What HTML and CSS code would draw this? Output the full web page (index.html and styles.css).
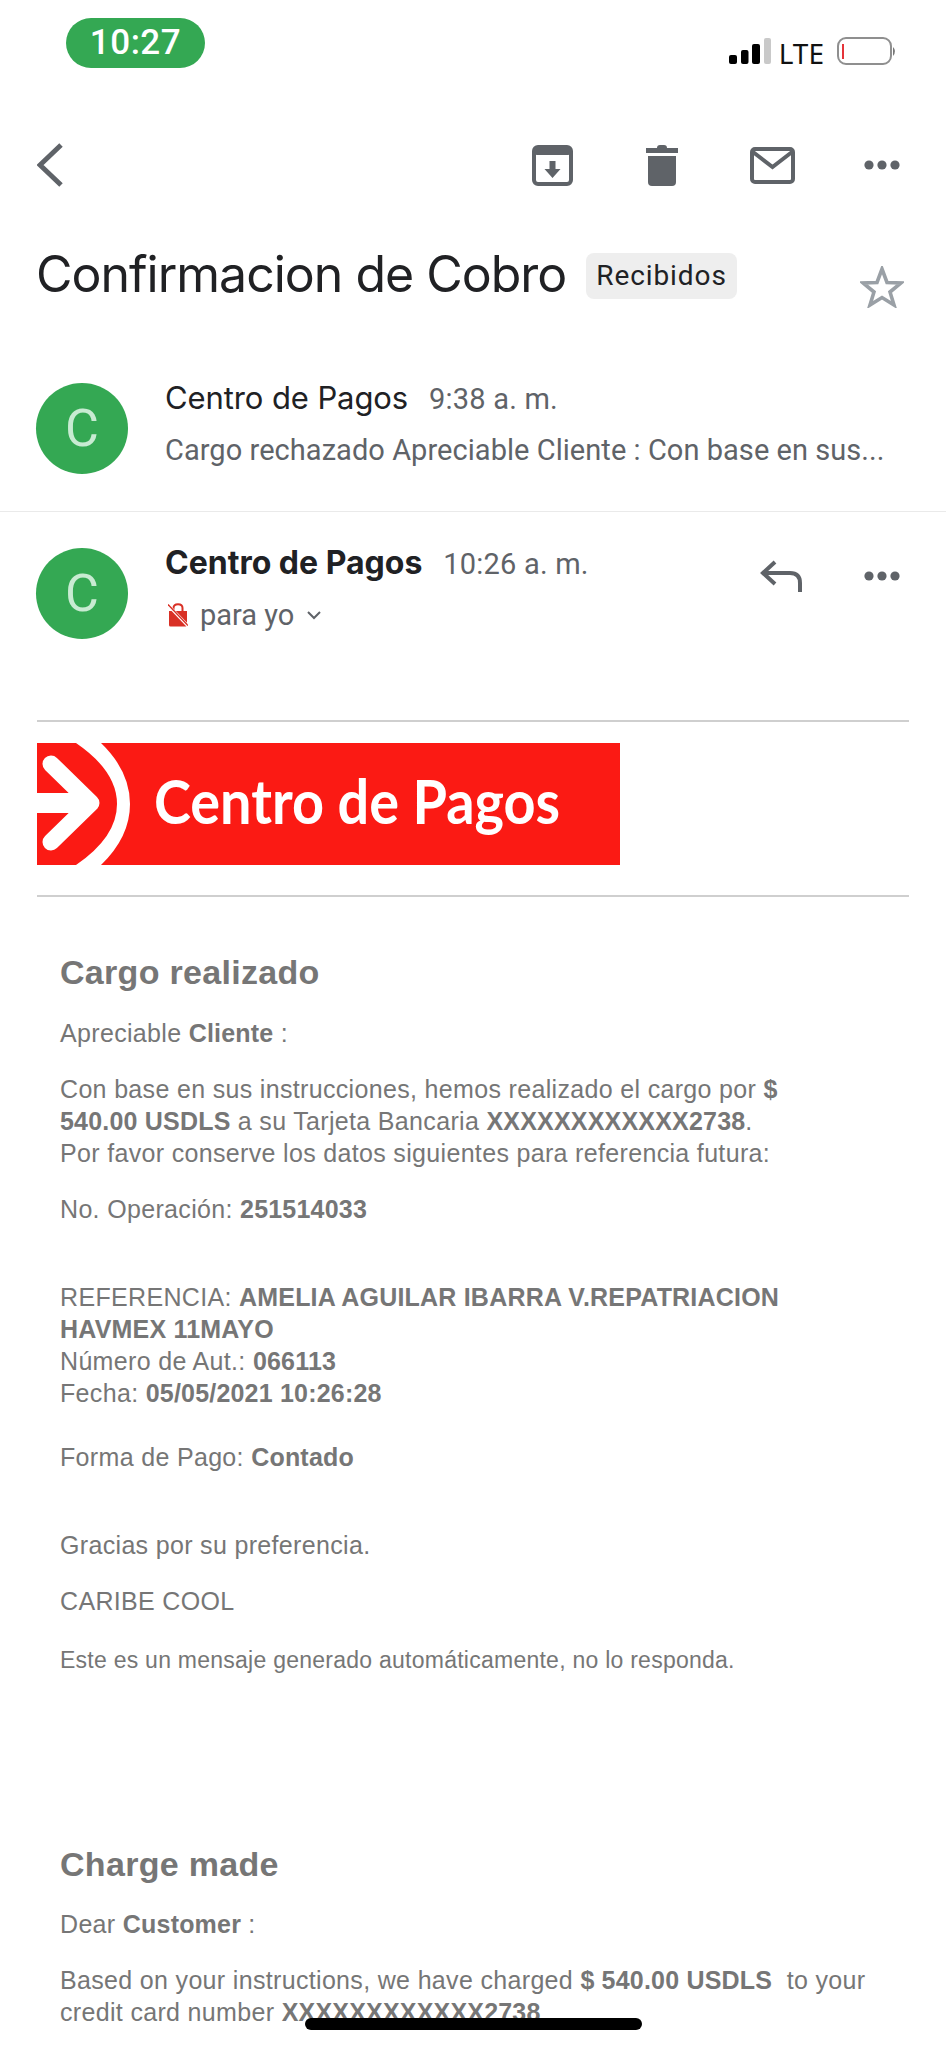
FILE: index.html
```html
<!DOCTYPE html>
<html lang="es">
<head>
    <meta charset="UTF-8">
    <meta name="viewport" content="width=device-width, initial-scale=1.0">
    <title>Confirmacion de Cobro</title>
    <link rel="stylesheet" href="styles.css">
</head>
<body>
<div class="page">

    <div class="status">
        <div class="clock">10:27</div>
        <div class="status-right">
            <svg class="signal" width="42" height="26" viewBox="0 0 42 26">
                <rect x="0" y="17" width="8" height="9" rx="2" fill="#000"/>
                <rect x="12" y="12" width="7.5" height="14" rx="2" fill="#000"/>
                <rect x="23" y="6" width="8" height="20" rx="2" fill="#000"/>
                <rect x="35" y="0" width="7" height="26" rx="2" fill="#c9c9c9"/>
            </svg>
            <span class="lte">LTE</span>
            <svg class="battery" width="60" height="28" viewBox="0 0 60 28">
                <rect x="1" y="1" width="53" height="26" rx="8" fill="none" stroke="#8f8f8f" stroke-width="2"/>
                <rect x="5" y="7" width="2" height="15" fill="#e5343a"/>
                <path d="M56 10 q4 4 0 9 z" fill="#777"/>
            </svg>
        </div>
    </div>

    <div class="toolbar">
        <svg class="back" width="26" height="44" viewBox="0 0 26 44">
            <path d="M24 2 L3 22 L24 42" fill="none" stroke="#5f6368" stroke-width="5"/>
        </svg>
        <div class="actions">
            <div class="slot">
                <svg width="41" height="41" viewBox="0 0 41 41">
                    <rect x="2" y="2" width="37" height="37" rx="4" fill="none" stroke="#5f6368" stroke-width="4"/>
                    <rect x="2" y="2" width="37" height="8" rx="3" fill="#5f6368"/>
                    <path d="M17.5 16 h6 v8 h5 l-8 9 l-8 -9 h5 z" fill="#5f6368"/>
                </svg>
            </div>
            <div class="slot">
                <svg width="32" height="41" viewBox="0 0 32 41">
                    <path d="M11 3 q0 -3 3 -3 h4 q3 0 3 3 h11 v5 h-32 v-5 z" fill="#5f6368"/>
                    <path d="M2 11 h28 v26 q0 4 -4 4 h-20 q-4 0 -4 -4 z" fill="#5f6368"/>
                </svg>
            </div>
            <div class="slot">
                <svg width="45" height="37" viewBox="0 0 45 37">
                    <rect x="2" y="2" width="41" height="33" rx="3" fill="none" stroke="#5f6368" stroke-width="4"/>
                    <path d="M3 5 L22.5 20 L42 5" fill="none" stroke="#5f6368" stroke-width="4"/>
                </svg>
            </div>
            <div class="slot">
                <svg class="dots" width="36" height="10" viewBox="0 0 36 10">
                    <circle cx="5" cy="5" r="4.6"/><circle cx="18" cy="5" r="4.6"/><circle cx="31" cy="5" r="4.6"/>
                </svg>
            </div>
        </div>
    </div>

    <div class="subject">
        <h1>Confirmacion de Cobro</h1>
        <span class="chip">Recibidos</span>
        <svg class="star" width="44" height="42" viewBox="0 0 44 42">
            <path d="M22 3 L27 16.5 L41 17 L30 26 L34 39 L22 31.5 L10 39 L14 26 L3 17 L17 16.5 Z" fill="none" stroke="#9aa0a6" stroke-width="3.6"/>
        </svg>
    </div>

    <div class="msg msg-collapsed">
        <div class="avatar">C</div>
        <div class="msg-info">
            <div class="msg-top"><span class="sender">Centro de Pagos</span><span class="time">9:38 a. m.</span></div>
            <div class="snippet">Cargo rechazado Apreciable Cliente : Con base en sus...</div>
        </div>
    </div>

    <div class="msg msg-open">
        <div class="avatar">C</div>
        <div class="msg-info">
            <div class="msg-top"><span class="sender sender-bold">Centro de Pagos</span><span class="time">10:26 a. m.</span></div>
            <div class="to">
                <svg class="lock" width="20" height="24" viewBox="0 0 20 24">
                    <path d="M1 8 h18 v14 q0 1.500 -1.500 1.500 h-15 q-1.500 0 -1.500 -1.500 z" fill="#d93025"/>
                    <path d="M5.500 8 v-3 q0 -3.800 4.500 -3.800 t4.500 3.800 v3" fill="none" stroke="#d93025" stroke-width="2"/>
                    <path d="M0 2 L20 23" stroke="#fff" stroke-width="3"/>
                    <path d="M0 1.500 L20 22.500" stroke="#d93025" stroke-width="1.400"/>
                </svg>
                <span>para yo</span>
                <svg class="caret" width="14" height="9" viewBox="0 0 14 9">
                    <path d="M1 1 L7 7 L13 1" fill="none" stroke="#5f6368" stroke-width="2"/>
                </svg>
            </div>
        </div>
        <div class="msg-actions">
            <div class="slot slot-reply">
                <svg width="42" height="32" viewBox="0 0 42 32">
                    <path d="M15 2 L3 13 L15 24" fill="none" stroke="#5f6368" stroke-width="4"/>
                    <path d="M4 13 H30 Q40 13 40 23 V32" fill="none" stroke="#5f6368" stroke-width="4"/>
                </svg>
            </div>
            <div class="slot">
                <svg class="dots" width="36" height="10" viewBox="0 0 36 10">
                    <circle cx="5" cy="5" r="4.6"/><circle cx="18" cy="5" r="4.6"/><circle cx="31" cy="5" r="4.6"/>
                </svg>
            </div>
        </div>
    </div>

    <div class="mail">
        <hr class="rule">
        <div class="banner">
            <svg class="banner-mark" width="110" height="122" viewBox="0 0 110 122">
                <path d="M39 0 Q80 28 80 61 Q80 94 39 122 L64 122 Q93 94 93 61 Q93 28 64 0 Z" fill="#fff"/>
                <path d="M14 21 L54 60 L14 99" fill="none" stroke="#fff" stroke-width="17" stroke-linecap="round" stroke-linejoin="round"/>
                <rect x="0" y="50" width="50" height="20" fill="#fff"/>
            </svg>
            <span class="banner-text">Centro de Pagos</span>
        </div>
        <hr class="rule rule-low">

        <div class="content">
            <h2>Cargo realizado</h2>
            <p class="first">Apreciable <b>Cliente</b> :</p>
            <p>Con base en sus instrucciones, hemos realizado el cargo por <b>$</b><br>
               <b>540.00 USDLS</b> a su Tarjeta Bancaria <b>XXXXXXXXXXXX2738</b>.<br>
               Por favor conserve los datos siguientes para referencia futura:</p>
            <p>No. Operación: <b>251514033</b></p>
            <p class="gap">REFERENCIA: <b>AMELIA AGUILAR IBARRA V.REPATRIACION</b><br>
               <b>HAVMEX 11MAYO</b><br>
               Número de Aut.: <b>066113</b><br>
               Fecha: <b>05/05/2021 10:26:28</b></p>
            <p class="near">Forma de Pago: <b>Contado</b></p>
            <p class="gap">Gracias por su preferencia.</p>
            <p>CARIBE COOL</p>
            <p class="small">Este es un mensaje generado automáticamente, no lo responda.</p>

            <h2 class="second">Charge made</h2>
            <p>Dear <b>Customer</b> :</p>
            <p>Based on your instructions, we have charged <b>$ 540.00 USDLS</b>&nbsp; to your<br>
               credit card number <b>XXXXXXXXXXXX2738</b></p>
        </div>
    </div>

    <div class="home-bar"></div>
</div>
</body>
</html>
```

FILE: styles.css
```css
html, body {
    margin: 0;
    background: #fff;
}
.page {
    position: relative;
    width: 946px;
    height: 2048px;
    overflow: hidden;
    font-family: Inter, sans-serif;
}

/* status bar */
.status {
    display: flex;
    height: 135px;
    box-sizing: border-box;
    padding: 18px 49px 0 66px;
    justify-content: space-between;
}
.clock {
    width: 139px;
    height: 50px;
    border-radius: 25px;
    background: #34a853;
    color: #fff;
    font: 500 35px/50px Roboto, sans-serif;
    letter-spacing: 0.5px;
    text-align: center;
}
.status-right {
    display: flex;
    align-items: flex-start;
    margin-top: 20px;
}
.lte {
    margin-left: 8px;
    color: #111;
    font: 28px/26px "Noto Sans", sans-serif;
    margin-top: 2px;
}
.battery {
    margin-left: 13px;
    margin-top: -1px;
}

/* toolbar */
.toolbar {
    display: flex;
    height: 60px;
    align-items: center;
    justify-content: space-between;
    padding: 0 9px 0 37px;
}
.actions, .msg-actions {
    display: flex;
}
.slot {
    width: 110px;
    display: flex;
    justify-content: center;
    align-items: center;
}
.slot-reply {
    width: 92px;
}
.dots {
    fill: #5f6368;
}

/* subject */
.subject {
    display: flex;
    align-items: flex-start;
    height: 62px;
    margin-top: 58px;
    padding: 0 42px 0 36px;
}
.subject h1 {
    margin: 0;
    color: #202124;
    font: 400 50px/42px Inter, sans-serif;
    letter-spacing: -1px;
    white-space: nowrap;
}
.chip {
    margin-left: 20px;
    height: 46px;
    padding: 0 10px;
    border-radius: 8px;
    background: #eeeeee;
    color: #202124;
    font: 400 28px/46px Roboto, sans-serif;
    letter-spacing: 0.9px;
}
.star {
    margin-left: auto;
    margin-top: 13px;
}

/* messages */
.msg {
    display: flex;
    padding-left: 36px;
}
.avatar {
    flex: none;
    width: 92px;
    height: 91px;
    border-radius: 50%;
    background: #34a853;
    color: #c8ebd2;
    font: 52px/91px Roboto, sans-serif;
    text-align: center;
}
.msg-info {
    margin-left: 37px;
    margin-top: -3px;
}
.msg-collapsed {
    height: 128px;
    margin-top: 68px;
    border-bottom: 1px solid #eaeaea;
}
.msg-open {
    padding-top: 36px;
    height: 91px;
}
.msg-top {
    display: flex;
    align-items: baseline;
    height: 36px;
    white-space: nowrap;
}
.sender {
    color: #202124;
    font: 400 31px/36px Inter, sans-serif;
    letter-spacing: -0.1px;
}
.sender-bold {
    font-size: 32px;
    font-weight: 700;
    letter-spacing: 0;
}
.time {
    margin-left: 21px;
    color: #5f6368;
    font: 29px/36px Roboto, sans-serif;
    letter-spacing: 0.2px;
}
.snippet {
    margin-top: 16px;
    color: #5f6368;
    font: 29px/36px Roboto, sans-serif;
    letter-spacing: 0.05px;
    white-space: nowrap;
}
.to {
    display: flex;
    align-items: center;
    margin-top: 16px;
    margin-left: 3px;
    color: #5f6368;
    font: 29px/36px Roboto, sans-serif;
}
.to span {
    margin-left: 12px;
}
.caret {
    margin-left: 13px;
}
.msg-actions {
    margin-left: auto;
    margin-right: 9px;
    height: 40px;
    margin-top: 8px;
}

/* email body */
.mail {
    padding: 0 37px;
    margin-top: 81px;
}
.rule {
    margin: 0;
    height: 2px;
    border: 0;
    background: #cfcfcf;
}
.rule-low {
    margin-top: 30px;
}
.banner {
    display: flex;
    align-items: center;
    width: 583px;
    height: 122px;
    margin-top: 21px;
    background: #fb1a14;
}
.banner-mark {
    flex: none;
}
.banner-text {
    margin: -8px 0 0 7px;
    color: #fff;
    font: 700 62px/122px Lato, sans-serif;
    white-space: nowrap;
    transform: scaleX(0.9);
    transform-origin: left center;
}
.content {
    padding: 55px 0 0 23px;
    color: #767676;
    font: 25px/32px "Liberation Sans", Arial, sans-serif;
    letter-spacing: 0.33px;
    white-space: nowrap;
}
.content b {
    letter-spacing: 0.2px;
}
.content h2 {
    margin: 0;
    font-size: 34px;
    line-height: 40px;
    font-weight: 700;
    letter-spacing: 0.3px;
}
.content p {
    margin: 24px 0 0;
}
.content p.first {
    margin-top: 25px;
}
.content p.gap {
    margin-top: 56px;
}
.content p.near {
    margin-top: 32px;
}
.content p.small {
    margin-top: 27px;
    font-size: 23px;
    letter-spacing: 0.25px;
}
.content h2.second {
    margin-top: 168px;
}
.home-bar {
    position: absolute;
    left: 305px;
    top: 2018px;
    width: 337px;
    height: 12px;
    border-radius: 6px;
    background: #000;
}
```
